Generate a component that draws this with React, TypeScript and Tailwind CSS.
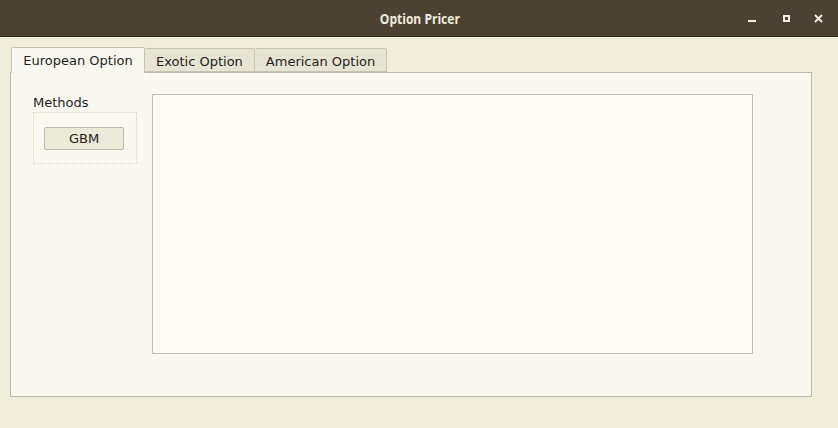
import React from 'react';

const TABS = ['European Option', 'Exotic Option', 'American Option'];

export default function App() {
  const [active, setActive] = React.useState(0);

  return (
    <div
      className="w-[838px] h-[428px] flex flex-col bg-[#f0eedb] text-[#1e1e1e] overflow-hidden"
      style={{ fontFamily: '"DejaVu Sans", sans-serif' }}
    >
      {/* window title bar */}
      <div className="h-[37px] shrink-0 flex items-center bg-[#4b4231] border-b border-[#2e271c] relative">
        <div
          className="flex-1 text-center text-[14px] font-bold text-[#f0ece0] pl-[2px]"
          style={{ fontFamily: '"Open Sans", sans-serif', transform: 'scaleX(0.86)' }}
        >
          Option Pricer
        </div>
        <div className="absolute right-0 top-0 h-full flex items-center">
          <div className="w-[35px] flex justify-center pt-[6px]">
            <div className="w-[8px] h-[2px] bg-[#f4f0e4]" />
          </div>
          <div className="w-[35px] flex justify-center">
            <div className="w-[7px] h-[7px] border-2 border-[#f4f0e4]" />
          </div>
          <div className="w-[34px] flex justify-center pr-[6px]">
            <svg width="9" height="9" viewBox="0 0 9 9">
              <path d="M1 1L8 8M8 1L1 8" stroke="#f4f0e4" strokeWidth="1.8" />
            </svg>
          </div>
        </div>
      </div>

      {/* tab widget */}
      <div className="flex-1 flex flex-col pl-[10px] pr-[26px] pt-[9px] pb-[31px]">
        <div className="flex items-end pl-[1px] h-[26px] relative z-10">
          {TABS.map((t, i) =>
            i === active ? (
              <button
                key={t}
                onClick={() => setActive(i)}
                className="h-[26px] w-[134px] text-[13px] bg-[#f9f8f0] border border-b-0 border-[#c6c3b2] rounded-t-[2px] mb-[-1px] pt-[1px]"
              >
                {t}
              </button>
            ) : (
              <button
                key={t}
                onClick={() => setActive(i)}
                className="h-[24px] px-[11px] pt-[3px] text-[13px] bg-[#e6e4d2] border border-[#c6c3b2] border-l-0 first:border-l rounded-t-[2px]"
              >
                {t}
              </button>
            )
          )}
        </div>
        <div className="flex-1 border border-[#bdbaa9] bg-[#f9f8f0] flex pl-[21px] pt-[21px] gap-[16px]">
          <div className="flex flex-col w-[104px]">
            <div className="text-[13px] leading-[16px] pl-[1px] mt-[1px]">Methods</div>
            <div className="mt-[1px] ml-[1px] w-[104px] h-[52px] border border-dotted border-[#d6d3bd] pt-[13px] pl-[10px]">
              <button className="w-[80px] h-[23px] text-[13px] bg-[#ebe9d8] border border-[#bdbaa9] rounded-[2px]">
                GBM
              </button>
            </div>
          </div>
          <div className="w-[601px] h-[260px] bg-[#fdfcf7] border border-[#c3c0ad]" />
        </div>
      </div>
    </div>
  );
}
